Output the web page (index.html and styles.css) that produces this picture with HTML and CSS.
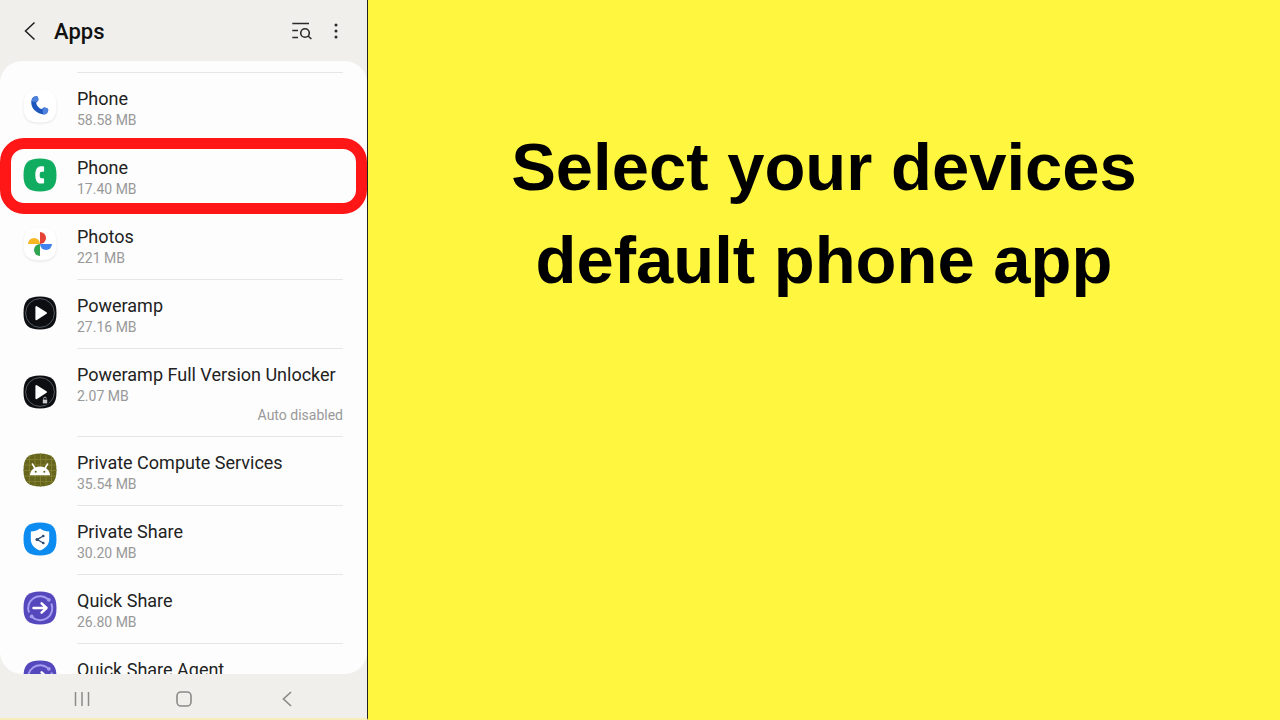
FILE: index.html
```html
<!DOCTYPE html>
<html lang="en">
<head>
  <meta charset="UTF-8">
  <meta name="viewport" content="width=device-width, initial-scale=1.0">
  <title>Select your devices default phone app</title>
  <link rel="stylesheet" href="styles.css">
</head>
<body>
  <div class="slide">
    <section class="phone">
      <header class="app-bar">
        <button class="icon-button" aria-label="Back">
          <svg width="24" height="24" viewBox="0 0 24 24" fill="none" stroke="#1c1c1c" stroke-width="1.5"><path d="M16.5 3.5 7.5 12l9 8.5"/></svg>
        </button>
        <h2 class="app-title">Apps</h2>
        <button class="icon-button" aria-label="Search apps">
          <svg width="24" height="24" viewBox="0 0 24 24" fill="none" stroke="#2a2a2a" stroke-width="1.6"><path d="M4.300 4.500h16.700M4.300 11.500H10M4.300 18.500H10"/><circle cx="17" cy="14" r="4.300"/><path d="m20 17 3.400 3"/></svg>
        </button>
        <button class="icon-button" aria-label="More options">
          <svg width="24" height="24" viewBox="0 0 24 24" fill="#2a2a2a"><circle cx="12" cy="6" r="1.5"/><circle cx="12" cy="12" r="1.5"/><circle cx="12" cy="18" r="1.5"/></svg>
        </button>
      </header>

      <main class="panel">
        <div class="list-edge"></div>
        <a class="row" href="#">
          <svg class="app-icon shadow" viewBox="0 0 34 34">
            <use href="#squircle" fill="#fff"/>
            <path d="M10.200 8.200c1.300-1 3.400-1.400 4.200-.7 1 .9 1.300 3.700.5 4.600-.6.8-1.700 1.200-1.600 2.200.3 2.300 2.900 5.300 5.200 5.700 1 .1 1.300-1 2.200-1.400 1.400-.5 3.800.5 4.400 1.600.6 1.200-.4 3.600-1.700 4.500-2.700 1.700-8.500.1-12.100-3.700C7.800 17.300 7.200 10.500 10.200 8.200z" fill="#1f57bd"/>
            <path d="M10.200 8.200c1.300-1 3.400-1.400 4.200-.7 1 .9 1.300 3.700.5 4.600-.6.8-3.500 1.200-5.900.2-.2-1.700.2-3.200 1.200-4.100zM20.700 18.600c1.400-.5 3.800.5 4.400 1.600.6 1.200-.4 3.600-1.700 4.500-.8.500-1.900.7-3.100.6-.8-2.100-.8-5.500.4-6.700z" fill="#4f82dd"/>
          </svg>
          <span class="info"><span class="name">Phone</span><span class="size">58.58 MB</span></span>
        </a>
        <a class="row selected" href="#">
          <svg class="app-icon" viewBox="0 0 34 34">
            <use href="#squircle" fill="#10ad60"/>
            <path d="M19.800 8.300h-2C14 8.300 12.300 12 12.300 17s1.700 8.600 5.500 8.600h2c.9 0 1.300-.5 1.300-1.300v-2.700c0-.9-.4-1.300-1.300-1.300h-1.300c-1.300 0-1.800-1.200-1.800-3.300s.5-3.300 1.800-3.300h1.300c.9 0 1.300-.4 1.300-1.300V9.600c0-.8-.4-1.300-1.300-1.300z" fill="#fff"/>
          </svg>
          <span class="info"><span class="name">Phone</span><span class="size">17.40 MB</span></span>
        </a>
        <a class="row" href="#">
          <svg class="app-icon shadow" viewBox="0 0 34 34">
            <use href="#squircle" fill="#fff"/>
            <path d="M17 17V5a6 6 0 0 1 0 12z" fill="#e54335"/>
            <path d="M17 17h12a6 6 0 0 1-12 0z" fill="#4284ed"/>
            <path d="M17 17v12a6 6 0 0 1 0-12z" fill="#31a552"/>
            <path d="M17 17H5a6 6 0 0 1 12 0z" fill="#f6b722"/>
          </svg>
          <span class="info"><span class="name">Photos</span><span class="size">221 MB</span></span>
        </a>
        <a class="row" href="#">
          <svg class="app-icon" viewBox="0 0 34 34">
            <use href="#squircle" fill="#0c0e12"/>
            <circle cx="17" cy="17" r="14.400" fill="none" stroke="#5b626b" stroke-width=".9"/>
            <path d="M13.400 11v12.200L23 17z" fill="#fff" stroke="#fff" stroke-width="2" stroke-linejoin="round"/>
          </svg>
          <span class="info"><span class="name">Poweramp</span><span class="size">27.16 MB</span></span>
        </a>
        <a class="row" href="#">
          <svg class="app-icon" viewBox="0 0 34 34">
            <use href="#squircle" fill="#0c0e12"/>
            <circle cx="17" cy="17" r="14.400" fill="none" stroke="#5b626b" stroke-width=".9"/>
            <path d="M13.400 11v12.200L23 17z" fill="#fff" stroke="#fff" stroke-width="2" stroke-linejoin="round"/>
            <path d="M18.500 22.500h7v7h-7z" fill="#0c0e12"/>
            <path d="M19.800 24.600h4.400v3.800h-4.400z" fill="#ccc"/>
            <path d="M20.600 24.600v-1a1.400 1.400 0 0 1 2.800 0" fill="none" stroke="#ccc" stroke-width=".8"/>
          </svg>
          <span class="info"><span class="name">Poweramp Full Version Unlocker</span><span class="size">2.07 MB</span><span class="status">Auto disabled</span></span>
        </a>
        <a class="row" href="#">
          <svg class="app-icon" viewBox="0 0 34 34">
            <use href="#squircle" fill="#66651d"/>
            <path d="M6.500 3v28M12 1v32M17.500 0v34M23 1v32M28.500 3v28M3 6.500h28M1 12h32M0 17.500h34M1 23h32M3 28.500h28" stroke="#8a8637" stroke-width=".7"/>
            <path d="M6.800 22.300c.5-4.500 3.900-8.800 10.200-8.800s9.700 4.300 10.200 8.800z" fill="#fff"/>
            <path d="m11.800 15-2.400-4M22.200 15l2.400-4" stroke="#fff" stroke-width="1.500" stroke-linecap="round"/>
            <circle cx="12.700" cy="18.700" r="1" fill="#66651d"/><circle cx="21.300" cy="18.700" r="1" fill="#66651d"/>
          </svg>
          <span class="info"><span class="name">Private Compute Services</span><span class="size">35.54 MB</span></span>
        </a>
        <a class="row" href="#">
          <svg class="app-icon" viewBox="0 0 34 34">
            <use href="#squircle" fill="#0c8cf0"/>
            <path d="M17 6.500c2.600 2 5.600 2.800 9.200 2.900v8.200c0 5-3.900 9-9.200 11-5.300-2-9.200-6-9.200-11V9.400c3.600-.1 6.600-.9 9.200-2.900z" fill="#fff"/>
            <path d="m20.300 14-6.300 3.600 6.300 3.400" fill="none" stroke="#27496f" stroke-width="1.300"/>
            <circle cx="20.300" cy="14" r="1.300" fill="#27496f"/><circle cx="14" cy="17.600" r="1.500" fill="#27496f"/><circle cx="20.300" cy="21" r="1.300" fill="#27496f"/>
          </svg>
          <span class="info"><span class="name">Private Share</span><span class="size">30.20 MB</span></span>
        </a>
        <a class="row" href="#">
          <svg class="app-icon" viewBox="0 0 34 34"><use href="#quick-share"/></svg>
          <span class="info"><span class="name">Quick Share</span><span class="size">26.80 MB</span></span>
        </a>
        <a class="row" href="#">
          <svg class="app-icon" viewBox="0 0 34 34"><use href="#quick-share"/></svg>
          <span class="info"><span class="name">Quick Share Agent</span></span>
        </a>
      </main>

      <nav class="nav-bar">
        <button class="icon-button" aria-label="Recent apps">
          <svg width="24" height="24" viewBox="0 0 24 24" fill="none" stroke="#8b8b88" stroke-width="1.500"><path d="M5.500 5v14M12 5v14M18.500 5v14"/></svg>
        </button>
        <button class="icon-button" aria-label="Home">
          <svg width="24" height="24" viewBox="0 0 24 24" fill="none" stroke="#8b8b88" stroke-width="1.600"><rect x="5" y="5" width="14" height="14" rx="4"/></svg>
        </button>
        <button class="icon-button" aria-label="Back">
          <svg width="24" height="24" viewBox="0 0 24 24" fill="none" stroke="#8b8b88" stroke-width="1.700"><path d="m16 5-7.500 7 7.500 7"/></svg>
        </button>
      </nav>
    </section>

    <section class="caption">
      <h1>Select your devices default phone app</h1>
    </section>
  </div>

  <!-- shared icon shapes -->
  <svg class="defs" width="0" height="0" aria-hidden="true">
    <defs>
      <path id="squircle" d="M17 .5C29 .5 33.500 5 33.500 17S29 33.500 17 33.500.5 29 .5 17 5 .5 17 .5z"/>
      <g id="quick-share">
        <use href="#squircle" fill="#5548bd"/>
        <path d="M6 21.500A12 12 0 0 1 24.800 7.900M28.300 12.500A12 12 0 0 1 9.300 26.200" fill="none" stroke="#a79df0" stroke-width="2"/>
        <circle cx="25.800" cy="8.800" r="1.900" fill="#a79df0"/><circle cx="8.700" cy="25.300" r="1.900" fill="#a79df0"/>
        <path d="M10.500 17H23M18.600 12.300l4.900 4.700-4.900 4.700" fill="none" stroke="#fff" stroke-width="2.500" stroke-linecap="round" stroke-linejoin="round"/>
      </g>
    </defs>
  </svg>
</body>
</html>
```
FILE: styles.css
```css
* {
  box-sizing: border-box;
}
body {
  margin: 0;
  background-color: #fff640;
  font-family: Roboto, 'Liberation Sans', sans-serif;
}
.slide {
  display: grid;
  grid-template-columns: 23fr 57fr;
  min-height: 100vh;
}
.phone {
  display: flex;
  flex-direction: column;
  height: 100vh;
  min-width: 0;
  background-color: #f0efec;
  border-right: 1px solid #222;
  border-bottom: 2px solid #f6edb8;
}
.icon-button {
  display: flex;
  padding: 0;
  border: none;
  background: none;
  cursor: pointer;
}
.app-bar {
  display: flex;
  align-items: center;
  gap: 12px;
  height: 61px;
  padding: 0 19px 0 18px;
}
.app-title {
  flex: 1;
  margin: 0;
  padding-top: 2px;
  font-size: 22px;
  font-weight: 500;
  color: #111;
}
.panel {
  flex: 1;
  min-height: 0;
  overflow: hidden;
  background-color: #fdfdfd;
  border-radius: 22px;
}
.list-edge {
  height: 12px;
  margin: 0 24px 0 77px;
  border-bottom: 1px solid #e6e6e6;
}
.row {
  position: relative;
  display: flex;
  gap: 20px;
  min-height: 69px;
  padding: 0 24px 0 23px;
  color: #222;
  text-decoration: none;
}
.app-icon {
  flex: none;
  align-self: center;
  width: 34px;
  height: 34px;
  margin-bottom: 3px;
}
.shadow {
  filter: drop-shadow(0 1px 1px rgba(0, 0, 0, 0.1));
}
.info {
  flex: 1;
  display: flex;
  flex-direction: column;
  padding: 14px 0 11px;
  border-bottom: 1px solid #e6e6e6;
  white-space: nowrap;
}
.name {
  font-size: 18px;
  line-height: 24px;
}
.size,
.status {
  font-size: 14px;
  line-height: 19px;
  color: #999;
}
.status {
  align-self: flex-end;
}
/* red ring around the app to pick */
.selected::after {
  content: '';
  position: absolute;
  inset: -4px 0 -3px;
  border: 11px solid #ff1616;
  border-radius: 24px;
}
.nav-bar {
  display: grid;
  grid-template-columns: repeat(3, 1fr);
  place-items: center;
  height: 44px;
  padding: 5px 29px 0 31px;
}
.caption {
  padding: 120px 120px 0;
}
h1 {
  margin: 0;
  font-family: 'Liberation Sans', Arial, sans-serif;
  font-size: 67px;
  font-weight: bold;
  line-height: 93px;
  text-align: center;
  color: #000;
}
.defs {
  position: absolute;
}
```
